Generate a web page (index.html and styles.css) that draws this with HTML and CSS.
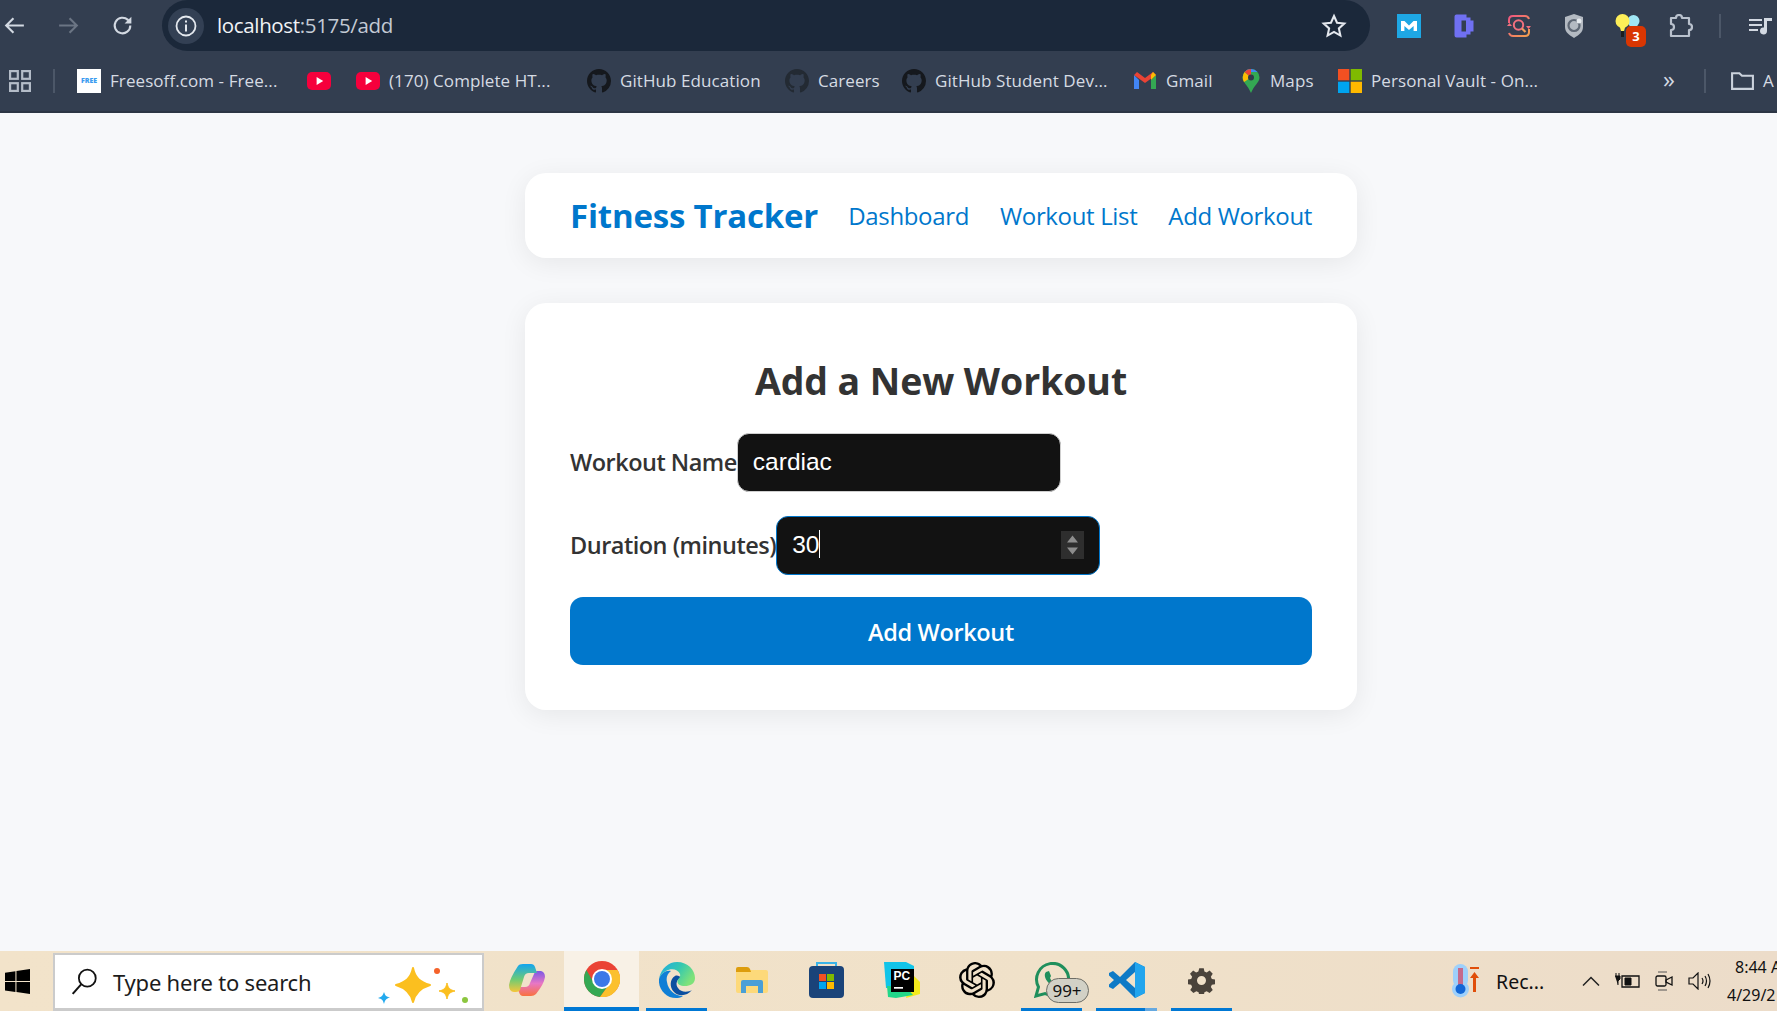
FILE: index.html
```html
<!DOCTYPE html>
<html lang="en">
<head>
<meta charset="utf-8">
<title>Fitness Tracker</title>
<link rel="stylesheet" href="styles.css">
</head>
<body>
<svg class="defs" width="0" height="0" aria-hidden="true">
  <defs>
    <linearGradient id="cpa" x1="0" y1="0" x2="0" y2="1"><stop offset="0" stop-color="#12a5f0"/><stop offset=".55" stop-color="#6fcb74"/><stop offset="1" stop-color="#f6c63a"/></linearGradient>
    <linearGradient id="cpb" x1="0" y1="0" x2="0" y2="1"><stop offset="0" stop-color="#7b58e6"/><stop offset=".5" stop-color="#e877c4"/><stop offset="1" stop-color="#f9713f"/></linearGradient>
    <linearGradient id="edg" x1="0" y1="0" x2="1" y2=".5"><stop offset="0" stop-color="#1fa9e6"/><stop offset=".55" stop-color="#34c8b0"/><stop offset="1" stop-color="#7ee27a"/></linearGradient>
    <linearGradient id="qgr" x1="0" y1="0" x2="1" y2="1"><stop offset="0" stop-color="#f0567f"/><stop offset="1" stop-color="#f2a14e"/></linearGradient>
  </defs>
  <symbol id="gh" viewBox="0 0 16 16"><path d="M8 0C3.58 0 0 3.58 0 8c0 3.54 2.29 6.53 5.47 7.59.4.07.55-.17.55-.38 0-.19-.01-.82-.01-1.49-2.01.37-2.53-.49-2.69-.94-.09-.23-.48-.94-.82-1.13-.28-.15-.68-.52-.01-.53.63-.01 1.08.58 1.23.82.72 1.21 1.87.87 2.33.66.07-.52.28-.87.51-1.07-1.78-.2-3.64-.89-3.64-3.95 0-.87.31-1.59.82-2.15-.08-.2-.36-1.02.08-2.12 0 0 .67-.21 2.2.82.64-.18 1.32-.27 2-.27s1.36.09 2 .27c1.53-1.04 2.2-.82 2.2-.82.44 1.1.16 1.92.08 2.12.51.56.82 1.27.82 2.15 0 3.07-1.87 3.75-3.65 3.95.29.25.54.73.54 1.48 0 1.07-.01 1.93-.01 2.2 0 .21.15.46.55.38A8.01 8.01 0 0 0 16 8c0-4.42-3.58-8-8-8z"/></symbol>
  <symbol id="yt" viewBox="0 0 24 24"><rect x="0" y="3" width="24" height="18" rx="5" fill="#f6003c"/><path d="M9.600 8l6.600 4-6.600 4z" fill="#fff"/></symbol>
  <symbol id="ms" viewBox="0 0 24 24"><rect width="11.300" height="11.300" fill="#f25022"/><rect x="12.700" width="11.300" height="11.300" fill="#7fba00"/><rect y="12.700" width="11.300" height="11.300" fill="#00a4ef"/><rect x="12.700" y="12.700" width="11.300" height="11.300" fill="#ffb900"/></symbol>
</svg>

<header class="browser">
  <div class="toolbar">
    <div class="nav-buttons">
      <svg class="ico-nav" viewBox="0 0 24 24"><path d="M21 12H4M11 5l-7 7 7 7" fill="none" stroke="#d3d9e2" stroke-width="2"/></svg>
      <svg class="ico-nav" viewBox="0 0 24 24"><path d="M3 12h17M13 5l7 7-7 7" fill="none" stroke="#6b7584" stroke-width="2"/></svg>
      <svg class="ico-nav" viewBox="0 0 24 24"><path d="M19.500 12a7.500 7.500 0 1 1-2.300-5.400L19.500 9" fill="none" stroke="#d3d9e2" stroke-width="2"/><path d="M20.500 3.500v6.500H14z" fill="#d3d9e2"/></svg>
    </div>
    <div class="omnibox">
      <span class="site-info"><svg viewBox="0 0 24 24" width="24" height="24"><circle cx="12" cy="12" r="9.500" fill="none" stroke="#e4e8ee" stroke-width="1.800"/><path d="M12 10.500v7M12 6.500v2" stroke="#e4e8ee" stroke-width="2"/></svg></span>
      <span class="url">localhost<span class="url-path">:5175/add</span></span>
      <svg class="star" viewBox="0 0 24 24" width="26" height="26"><path d="M12 2.800l2.800 6.200 6.700.7-5 4.500 1.400 6.600L12 17.400l-5.900 3.400 1.400-6.600-5-4.500 6.700-.7z" fill="none" stroke="#e4e8ee" stroke-width="1.900"/></svg>
    </div>
    <div class="extensions">
      <svg class="ext" viewBox="0 0 24 24"><rect width="24" height="24" fill="#1ea7e4"/><path d="M4 17V7h3.500L12 11.500 16.500 7H20v10h-3.400v-5L12 16 7.400 12v5z" fill="#fff"/></svg>
      <svg class="ext" viewBox="0 -0.500 19 24"><path d="M2 0h10v3h4v3h3v11h-3v3h-4v3H2q-2 0-2-2V2q0-2 2-2z" fill="#7070f2"/><rect x="7" y="6" width="4.500" height="11" fill="#333e50"/></svg>
      <svg class="ext" viewBox="0 0 24 24"><path d="M2 9V6q0-4 4-4h12q3 0 4 3M22 15v3q0 4-4 4H6q-3 0-4-3" fill="none" stroke="url(#qgr)" stroke-width="2"/><path d="M0 12l2.500-3L5 12zM24 12l-2.500 3L19 12z" fill="#f0707e"/><circle cx="11.500" cy="11" r="4.700" fill="none" stroke="#f0707e" stroke-width="2"/><path d="M15 14.500l3.500 3.500" stroke="#f0a05a" stroke-width="2.200"/></svg>
      <svg class="ext" viewBox="0 0 24 24"><path d="M12 0l9 3v10c0 5-4 8-9 11-5-3-9-6-9-11V3z" fill="#b4bac2"/><circle cx="12" cy="11.500" r="5.500" fill="none" stroke="#5f6875" stroke-width="2.200"/><circle cx="17" cy="7" r="2.500" fill="#e7ebef"/></svg>
      <span class="ext-bulb">
        <svg class="ext" viewBox="0 0 26 24"><circle cx="19" cy="7" r="6" fill="#9fe6f5"/><circle cx="8" cy="7" r="7" fill="#fdee58"/><path d="M5 12h6l-1.500 5h-3z" fill="#fdee58"/><rect x="6.500" y="17" width="3" height="6" fill="#1d1d1d"/></svg>
        <span class="bulb-badge">3</span>
      </span>
      <svg class="ext" viewBox="0 0 24 24"><path d="M2 4H7A3 3 0 0 1 13 4H20V10A2.800 2.800 0 0 1 20 16V22H2V16A3 3 0 0 0 2 10z" fill="none" stroke="#b9c1cd" stroke-width="2.200" stroke-linejoin="round"/></svg>
      <span class="v-sep"></span>
      <svg class="ext" viewBox="0 0 24 24"><path d="M0 6h13M0 11h13M0 16h9" stroke="#d3d9e2" stroke-width="2"/><path d="M15 4h8v3h-5v10a3.500 3.500 0 1 1-3-3.500z" fill="#d3d9e2"/></svg>
    </div>
  </div>
  <div class="bookmarks">
    <div class="apps">
      <svg viewBox="0 0 20 20" width="22" height="22"><g fill="none" stroke="#b4bcc8" stroke-width="2"><rect x="1" y="1" width="7" height="7"/><rect x="12" y="1" width="7" height="7"/><rect x="1" y="12" width="7" height="7"/><rect x="12" y="12" width="7" height="7"/></g></svg>
      <span class="v-sep"></span>
    </div>
    <ul class="bm-list">
      <li class="bm"><span class="free-ico">FREE</span>Freesoff.com - Free...</li>
      <li class="bm"><svg class="bm-ico"><use href="#yt"/></svg></li>
      <li class="bm"><svg class="bm-ico"><use href="#yt"/></svg>(170) Complete HT...</li>
      <li class="bm"><svg class="bm-ico gh-dark"><use href="#gh"/></svg>GitHub Education</li>
      <li class="bm"><svg class="bm-ico gh-mid"><use href="#gh"/></svg>Careers</li>
      <li class="bm"><svg class="bm-ico gh-dark"><use href="#gh"/></svg>GitHub Student Dev...</li>
      <li class="bm"><svg class="bm-ico" viewBox="0 0 24 24"><path d="M1 6v14h5V11z" fill="#4285f4"/><path d="M18 11v9h5V6z" fill="#34a853"/><path d="M1 6l11 8 11-8-3-3-8 6-8-6z" fill="#ea4335"/><path d="M18 6l2-3 3 3-5 5z" fill="#fbbc04"/></svg>Gmail</li>
      <li class="bm bm-maps"><svg class="bm-ico" viewBox="0 0 24 24"><path d="M12 0a8.500 8.500 0 0 1 8.500 8.500c0 5-5.500 8-8.500 15.500C9 16.500 3.500 13.500 3.500 8.500A8.500 8.500 0 0 1 12 0z" fill="#34a853"/><path d="M12 0a8.500 8.500 0 0 1 6.500 3L5.500 3A8.500 8.500 0 0 1 12 0z" fill="#4285f4"/><path d="M5.500 3L12 8.500 5 13C3 10 3.500 6 5.500 3z" fill="#fbbc04"/><path d="M5.500 3A8.500 8.500 0 0 1 12 0v8.500z" fill="#ea4335"/><circle cx="12" cy="8.500" r="3" fill="#2f3a4b"/></svg>Maps</li>
      <li class="bm"><svg class="bm-ico"><use href="#ms"/></svg>Personal Vault - On...</li>
    </ul>
    <div class="bm-end">
      <span class="chev">»</span>
      <span class="v-sep"></span>
      <svg viewBox="0 0 24 24" width="25" height="25"><path d="M2 5h7l2.500 2.500H22V20H2z" fill="none" stroke="#cbd2dc" stroke-width="2"/></svg>
      <span>A</span>
    </div>
  </div>
</header>

<main class="page">
  <nav class="navbar">
    <a class="logo">Fitness Tracker</a>
    <div class="nav-links">
      <a class="nav-link">Dashboard</a>
      <a class="nav-link">Workout List</a>
      <a class="nav-link">Add Workout</a>
    </div>
  </nav>
  <section class="card">
    <h2 class="card-title">Add a New Workout</h2>
    <form class="form">
      <div class="form-row">
        <label class="field-label" for="wname">Workout Name</label>
        <input class="field" id="wname" type="text" value="cardiac">
      </div>
      <div class="form-row">
        <label class="field-label" for="wdur">Duration (minutes)</label>
        <span class="num-wrap">
          <input class="field field-focus" id="wdur" type="text" value="30">
          <span class="caret"></span>
          <span class="spin"><svg viewBox="0 0 23 28" width="23" height="28"><path d="M11.500 4.500l5.500 7H6zM11.500 23.500l-5.500-7h11z" fill="#8d8d8d"/></svg></span>
        </span>
      </div>
      <button class="submit" type="button">Add Workout</button>
    </form>
  </section>
</main>

<footer class="taskbar">
  <div class="start"><svg viewBox="0 0 24 24" width="25" height="25"><path d="M0 3.500l10-1.400V11.500H0zM11 2l13-2v11.500H11zM0 12.500h10v9.500L0 20.600zM11 12.500h13V24l-13-2z" fill="#000"/></svg></div>
  <div class="search">
    <svg viewBox="0 0 24 24" width="27" height="27"><circle cx="14.500" cy="9" r="7.500" fill="none" stroke="#111" stroke-width="1.600"/><path d="M9 14.500L1.500 23" stroke="#111" stroke-width="1.800"/></svg>
    <span class="search-text">Type here to search</span>
    <svg class="sparkle" viewBox="0 0 92 42" width="92" height="42"><path d="M36 3C38 13 43 17 53 20 43 23 38 28 36 37 34 28 29 23 19 20 29 17 34 13 36 3z" fill="#fbbf1f" stroke="#fbbf1f" stroke-width="2" stroke-linejoin="round"/><path d="M70 18c1 5 3 7 8 8-5 1-7 3-8 8-1-5-3-7-8-8 5-1 7-3 8-8z" fill="#fbbf1f" stroke="#fbbf1f"/><path d="M7 27c1 3 2 5 6 5-4 2-5 3-6 7-1-4-2-5-6-6 4-1 5-3 6-6z" fill="#22a9ee"/><circle cx="60" cy="6" r="3" fill="#f5622a"/><circle cx="88" cy="35" r="3" fill="#8cc63f"/></svg>
  </div>
  <ul class="apps-row">
    <li class="tb-app"><svg viewBox="0 0 36 34" width="36" height="34"><path d="M28 8h4q4 1 4 6-1 7-9 17-2 2-5 2h-8q-3 0-4-4l-2-5h8q4 0 5-4l4-9q1-3 3-3z" fill="url(#cpb)"/><path d="M9 3q1-2 5-2h8q3 0 4 3l2 6h-8q-4 0-5 4l-4 13q-1 2-4 2H5q-5 0-5-7 1-7 9-19z" fill="url(#cpa)"/></svg></li>
    <li class="tb-app tb-active"><svg viewBox="0 0 36 36" width="36" height="36"><circle cx="18" cy="18" r="18" fill="#ea4335"/><path d="M2.400 9L10.200 22.500 18 18 25.800 22.500 16 36A18 18 0 0 1 2.400 9z" fill="#34a853"/><path d="M33.600 9H18V18L25.800 22.500 16 36A18 18 0 0 0 33.600 9z" fill="#fbc02d"/><circle cx="18" cy="18" r="10" fill="#fff"/><circle cx="18" cy="18" r="8" fill="#3b78e7"/></svg></li>
    <li class="tb-app tb-open"><svg viewBox="0 0 36 36" width="36" height="36"><path d="M0 17C-1 27 7 36 17 36 19 36 21 36 24 34 16 34 9 28 8 20 7 16 8 12 12 9 7 8 2 11 0 17z" fill="#0f7fd6"/><path d="M16 14C11 17 10 25 15 30 20 35 28 34 33 28 30 30 22 31 19 26 16 22 18 17 22 16 21 14 18 13 16 14z" fill="#0b4fa0"/><path d="M0 17C2 6 10 0 18 0 29 0 36 8 36 16 36 22 31 24 26 24 21 24 18 22 18.500 19 19 16 22 16 21 12 19 7 12 6 7 9 3 11 1 14 0 17z" fill="url(#edg)"/></svg></li>
    <li class="tb-app"><svg viewBox="0 0 32 26" width="32" height="26"><path d="M0 3h30q2 0 2 2v19q0 2-2 2H2q-2 0-2-2z" fill="#fdd97a"/><path d="M0 2q0-2 2-2h9q2 0 3 2l1 3H0z" fill="#dd9d0d"/><path d="M5 26V15q0-2 2-2h18q2 0 2 2v11h-5v-7H10v7z" fill="#4a9fd6"/></svg></li>
    <li class="tb-app"><svg viewBox="0 0 35 36" width="35" height="36"><path d="M8 5V1h19v4" fill="none" stroke="#39b3e8" stroke-width="2"/><rect y="4" width="35" height="32" rx="4" fill="#1a4379"/><rect x="10" y="12" width="7" height="7" fill="#f25022"/><rect x="18" y="12" width="7" height="7" fill="#7fba00"/><rect x="10" y="20" width="7" height="7" fill="#00a4ef"/><rect x="18" y="20" width="7" height="7" fill="#ffb900"/></svg></li>
    <li class="tb-app"><svg viewBox="0 0 36 36" width="36" height="36"><path d="M0 0h22l8 4v9L10 26H2z" fill="#11c4e9"/><path d="M28 12l8 8v12l-14 4z" fill="#f4ea1c"/><path d="M3 24h18l8 9-17 3-8-1z" fill="#21d789"/><rect x="7" y="7" width="23" height="23" fill="#000"/><text x="9.500" y="18" class="pc-text">PC</text><rect x="10" y="25" width="9" height="1.700" fill="#fff"/></svg></li>
    <li class="tb-app"><svg viewBox="0 0 24 24" width="36" height="36"><path fill="#000" d="M22.2819 9.8211a5.9847 5.9847 0 0 0-.5157-4.9108 6.0462 6.0462 0 0 0-6.5098-2.9A6.0651 6.0651 0 0 0 4.9807 4.1818a5.9847 5.9847 0 0 0-3.9977 2.9 6.0462 6.0462 0 0 0 .7427 7.0966 5.98 5.98 0 0 0 .511 4.9107 6.051 6.051 0 0 0 6.5146 2.9001A5.9847 5.9847 0 0 0 13.2599 24a6.0557 6.0557 0 0 0 5.7718-4.2058 5.9894 5.9894 0 0 0 3.9977-2.9001 6.0557 6.0557 0 0 0-.7475-7.0729zm-9.022 12.6081a4.4755 4.4755 0 0 1-2.8764-1.0408l.1419-.0804 4.7783-2.7582a.7948.7948 0 0 0 .3927-.6813v-6.7369l2.02 1.1686a.071.071 0 0 1 .038.052v5.5826a4.504 4.504 0 0 1-4.4945 4.4944zm-9.6607-4.1254a4.4708 4.4708 0 0 1-.5346-3.0137l.142.0852 4.783 2.7582a.7712.7712 0 0 0 .7806 0l5.8428-3.3685v2.3324a.0804.0804 0 0 1-.0332.0615L9.74 19.9502a4.4992 4.4992 0 0 1-6.1408-1.6464zM2.3408 7.8956a4.485 4.485 0 0 1 2.3655-1.9728V11.6a.7664.7664 0 0 0 .3879.6765l5.8144 3.3543-2.0201 1.1685a.0757.0757 0 0 1-.071 0l-4.8303-2.7865A4.504 4.504 0 0 1 2.3408 7.872zm16.5963 3.8558L13.1038 8.364 15.1192 7.2a.0757.0757 0 0 1 .071 0l4.8303 2.7913a4.4944 4.4944 0 0 1-.6765 8.1042v-5.6772a.79.79 0 0 0-.407-.667zm2.0107-3.0231l-.142-.0852-4.7735-2.7818a.7759.7759 0 0 0-.7854 0L9.409 9.2297V6.8974a.0662.0662 0 0 1 .0284-.0615l4.8303-2.7866a4.4992 4.4992 0 0 1 6.6802 4.66zM8.3065 12.863l-2.02-1.1638a.0804.0804 0 0 1-.038-.0567V6.0742a4.4992 4.4992 0 0 1 7.3757-3.4537l-.142.0805L8.704 5.459a.7948.7948 0 0 0-.3927.6813zm1.0976-2.3654l2.602-1.4998 2.6069 1.4998v2.9994l-2.5974 1.4997-2.6067-1.4997Z"/></svg></li>
    <li class="tb-app tb-open"><span class="wa"><svg viewBox="0 0 36 36" width="36" height="36"><path d="M2 34l2.500-9A16 16 0 1 1 11 31.500z" fill="none" stroke="#1f8f5c" stroke-width="3"/><path d="M12 10c-3 3 0 9 4 12s8 4 10 1l-4-3-2 1c-2-1-3-3-4-5l1-2-2-5z" fill="#1f8f5c"/></svg><span class="wa-badge">99+</span></span></li>
    <li class="tb-app tb-open tb-split"><svg viewBox="0 0 36 36" width="36" height="36"><path d="M26 0l10 5v26l-10 5L11 21l-7 6-4-2V11l4-2 7 6z" fill="#0e7ac6"/><path d="M26 0l10 5v26l-10 5z" fill="#22a5ee"/><path d="M26 10l-9 8 9 8z" fill="#f0e2cb"/><path d="M0 13.500L5 18l-5 4.500z" fill="#f0e2cb"/></svg></li>
    <li class="tb-app tb-open"><svg viewBox="0 0 24 24" width="27" height="27"><path d="M10 1h4l.6 3 2 .9 2.600-1.700 2.800 2.800-1.700 2.600.9 2 3 .6v4l-3 .6-.9 2 1.700 2.600-2.800 2.800-2.600-1.700-2 .9-.6 3h-4l-.6-3-2-.9-2.600 1.700-2.800-2.800 1.700-2.600-.9-2-3-.6v-4l3-.6.9-2L1.800 6l2.800-2.800 2.600 1.700 2-.9zM12 8a4 4 0 1 0 0 8 4 4 0 0 0 0-8z" fill="#4a433b"/></svg></li>
  </ul>
  <div class="tray">
    <svg class="thermo" viewBox="0 0 28 34" width="28" height="34"><rect x="1" y="0" width="15" height="24" rx="7.500" fill="#9ed0fb"/><circle cx="8.500" cy="25" r="8.500" fill="#9ed0fb"/><rect x="6" y="4" width="5" height="18" fill="#c46a8c"/><circle cx="8.500" cy="25" r="5" fill="#1266d6"/><path d="M18 3h9v2h-9z" fill="#e04e0a"/><path d="M22.500 8l4.500 6h-3v14h-3V14h-3z" fill="#e04e0a"/></svg>
    <span class="rec">Rec...</span>
    <svg class="tray-caret" viewBox="0 0 18 10" width="18" height="10"><path d="M1 9.500l8-8 8 8" fill="none" stroke="#222" stroke-width="1.500"/></svg>
    <svg class="tray-batt" viewBox="0 0 26 16" width="26" height="16"><path d="M7 3h17v11H7z" fill="none" stroke="#111" stroke-width="1.300"/><path d="M10 5h6v7h-6zM1 0v3M4 0v3M0 3h5v3L3 8v4" fill="#111" stroke="#111"/></svg>
    <svg class="tray-cam" viewBox="0 0 18 22" width="18" height="22"><rect x="1" y="6" width="10" height="10" rx="1.500" fill="none" stroke="#111" stroke-width="1.300"/><path d="M11 10l6-3v8l-6-3z" fill="none" stroke="#111" stroke-width="1.300"/><path d="M3 2h9M3 20h9" stroke="#555"/></svg>
    <svg class="tray-vol" viewBox="0 0 24 18" width="24" height="18"><path d="M1 6h4l5-5v16l-5-5H1z" fill="none" stroke="#111" stroke-width="1.200"/><path d="M14 6q2 3 0 6M17 4q3 5 0 10M20 2q4 7 0 14" fill="none" stroke="#111" stroke-width="1.200"/></svg>
    <div class="clock"><span class="clock-time">8:44 A</span><span>4/29/2</span></div>
  </div>
</footer>
</body>
</html>
```
FILE: styles.css
```css
* { box-sizing: border-box; }
html, body { margin: 0; height: 100%; }
body {
  display: flex;
  flex-direction: column;
  height: 100vh;
  overflow: hidden;
  background: #f7f8fa;
  font-family: "Open Sans", "Noto Sans", sans-serif;
}
.defs { position: absolute; }
ul { list-style: none; margin: 0; padding: 0; }

/* browser chrome */
.browser { flex: none; height: 113px; background: #333e50; border-bottom: 2px solid #2c3544; color: #d6dbe3; white-space: nowrap; }
.toolbar { display: flex; height: 51px; align-items: center; }
.nav-buttons { display: flex; width: 162px; padding-left: 2px; gap: 29px; flex: none; }
.ico-nav { width: 25px; height: 25px; }
.omnibox { width: 1208px; height: 51px; background: #1b283a; border-radius: 26px; display: flex; align-items: center; padding: 0 23px 0 6px; flex: none; }
.site-info { width: 36px; height: 36px; border-radius: 50%; background: #334054; display: flex; align-items: center; justify-content: center; flex: none; }
.url { margin-left: 13px; padding-bottom: 2px; font-size: 20.500px; letter-spacing: -0.35px; color: #f1f3f6; flex: 1; }
.url-path { color: #c3cad4; }
.extensions { display: grid; grid-template-columns: 55px 55px 55px 52px 55px 50px 30px 24px; align-items: center; margin-left: 27px; flex: none; }
.ext { width: 24px; height: 24px; display: block; }
.ext-bulb { position: relative; display: block; width: 27px; }
.ext-bulb .ext { width: 27px; }
.bulb-badge { position: absolute; left: 12px; top: 12px; width: 20px; height: 21px; border-radius: 5px; background: #d93602; color: #fff; font-size: 13px; font-weight: 700; text-align: center; line-height: 21px; }
.v-sep { display: block; width: 2px; height: 24px; background: #4c5768; flex: none; }

.bookmarks { display: flex; height: 59px; align-items: center; font-size: 17px; letter-spacing: 0.08px; }
.apps { display: flex; align-items: center; width: 77px; padding-left: 9px; gap: 22px; flex: none; }
.bm-list { display: grid; grid-template-columns: 230px 49px 231px 198px 117px 231px 106px 99px 323px; flex: none; align-items: center; }
.bm { display: flex; align-items: center; gap: 9px; }
.bm-ico { width: 24px; height: 24px; flex: none; }
.bm-maps { gap: 7px; }
.gh-dark { fill: #15181d; }
.gh-mid { fill: #232a33; }
.free-ico { width: 24px; height: 24px; background: #fff; color: #3b9cf0; font-size: 7px; font-weight: 800; letter-spacing: 0; line-height: 24px; text-align: center; flex: none; }
.bm-end { display: flex; align-items: center; flex: none; }
.chev { font-size: 24px; width: 43px; padding-left: 2px; line-height: 1; padding-bottom: 4px; color: #d3d9e2; }
.bm-end svg { margin: 0 8px 0 24px; flex: none; }

/* page */
.page { flex: 1; padding: 60px 0 0 525px; min-height: 0; }
.navbar, .card { width: 832px; background: #fff; border-radius: 21px; box-shadow: 0 5px 27px rgba(0, 0, 0, .07); }
.navbar { height: 85px; padding: 0 45px; display: flex; align-items: center; justify-content: space-between; }
.logo { font-size: 33px; font-weight: 700; color: #0077cc; letter-spacing: -0.2px; }
.nav-links { display: flex; gap: 31px; }
.nav-link { font-size: 24px; font-weight: 500; color: #0077cc; letter-spacing: -0.35px; }
.card { margin-top: 45px; height: 407px; padding: 45px; }
.card-title { margin: 0; height: 65px; text-align: center; font-size: 37.500px; line-height: 66px; font-weight: 700; color: #333; letter-spacing: -0.1px; }
.form { display: flex; flex-direction: column; margin-top: 20px; }
.form-row { display: flex; align-items: center; margin-bottom: 24px; }
.field-label { padding-bottom: 2px; font-size: 23.500px; font-weight: 600; color: #333; letter-spacing: -0.5px; white-space: nowrap; flex: none; }
.field { width: 324px; height: 59px; padding: 0 15px 2px; border: 1.500px solid #cfcfcf; border-radius: 12px; background: #121212; color: #fff; font-family: "Liberation Sans", Arial, sans-serif; font-size: 24.500px; outline: none; display: block; }
.field-focus { border-color: #0077cc; }
.num-wrap { position: relative; display: block; flex: none; }
.caret { position: absolute; left: 43px; top: 14px; width: 1px; height: 28px; background: #fff; }
.spin { position: absolute; right: 16px; top: 15px; width: 23px; height: 28px; background: #2e2e2e; display: block; }
.spin svg { display: block; }
.submit { width: 742px; height: 68px; margin-top: -2px; padding-top: 2px; border: 0; border-radius: 13px; background: #0077cc; color: #fff; font-family: inherit; font-size: 23.500px; font-weight: 600; letter-spacing: -0.35px; }

/* taskbar */
.taskbar { flex: none; height: 60px; display: flex; align-items: stretch; background: linear-gradient(90deg, #f2e3ca 0%, #f0e1c9 60%, #ecdcc9 100%); white-space: nowrap; }
.start { width: 53px; display: flex; align-items: center; padding-left: 5px; flex: none; }
.search { width: 431px; margin-top: 2px; display: flex; align-items: center; padding-left: 16px; background: #fff; border: 2px solid #cbcbcb; border-bottom-width: 3px; flex: none; font-family: "Noto Sans", sans-serif; }
.search-text { margin-left: 15px; width: 226px; font-size: 22px; letter-spacing: -0.22px; color: #1c1c1c; flex: none; }
.sparkle { flex: none; margin-left: 38px; margin-top: 8px; }
.apps-row { display: grid; grid-template-columns: repeat(10, 75px); margin-left: 5px; flex: none; }
.tb-app { display: flex; align-items: center; justify-content: center; position: relative; padding-bottom: 2px; }
.tb-active { background: #f8f1e6; border-bottom: 4px solid #0078d4; padding-bottom: 0; }
.tb-open::after { content: ""; position: absolute; left: 7px; right: 7px; bottom: 0; height: 3px; background: #0078d4; }
.tb-split::after { background: linear-gradient(90deg, #0078d4 80%, #66a9e0 80%); }
.pc-text { font-family: "Liberation Sans", sans-serif; font-size: 12px; font-weight: 700; fill: #fff; }
.wa { position: relative; display: block; height: 36px; }
.wa-badge { position: absolute; left: 12px; top: 16px; width: 43px; height: 25px; border-radius: 13px; background: #d2d1c6; border: 1px solid #6d6d66; color: #111; font-family: "Noto Sans", sans-serif; font-size: 17px; line-height: 23px; text-align: center; }
.tray { display: flex; align-items: center; margin-left: 213px; flex: none; font-family: "Noto Sans", sans-serif; color: #111; }
.tray svg { flex: none; }
.thermo { margin-right: 16px; }
.rec { font-size: 19.500px; letter-spacing: 0; width: 86px; flex: none; }
.tray-caret { margin-right: 15px; }
.tray-batt { margin-right: 14px; }
.tray-cam { margin-right: 15px; }
.clock { display: flex; flex-direction: column; margin-left: 15px; font-size: 16px; line-height: 28px; }
.clock-time { padding-left: 8px; }
```
